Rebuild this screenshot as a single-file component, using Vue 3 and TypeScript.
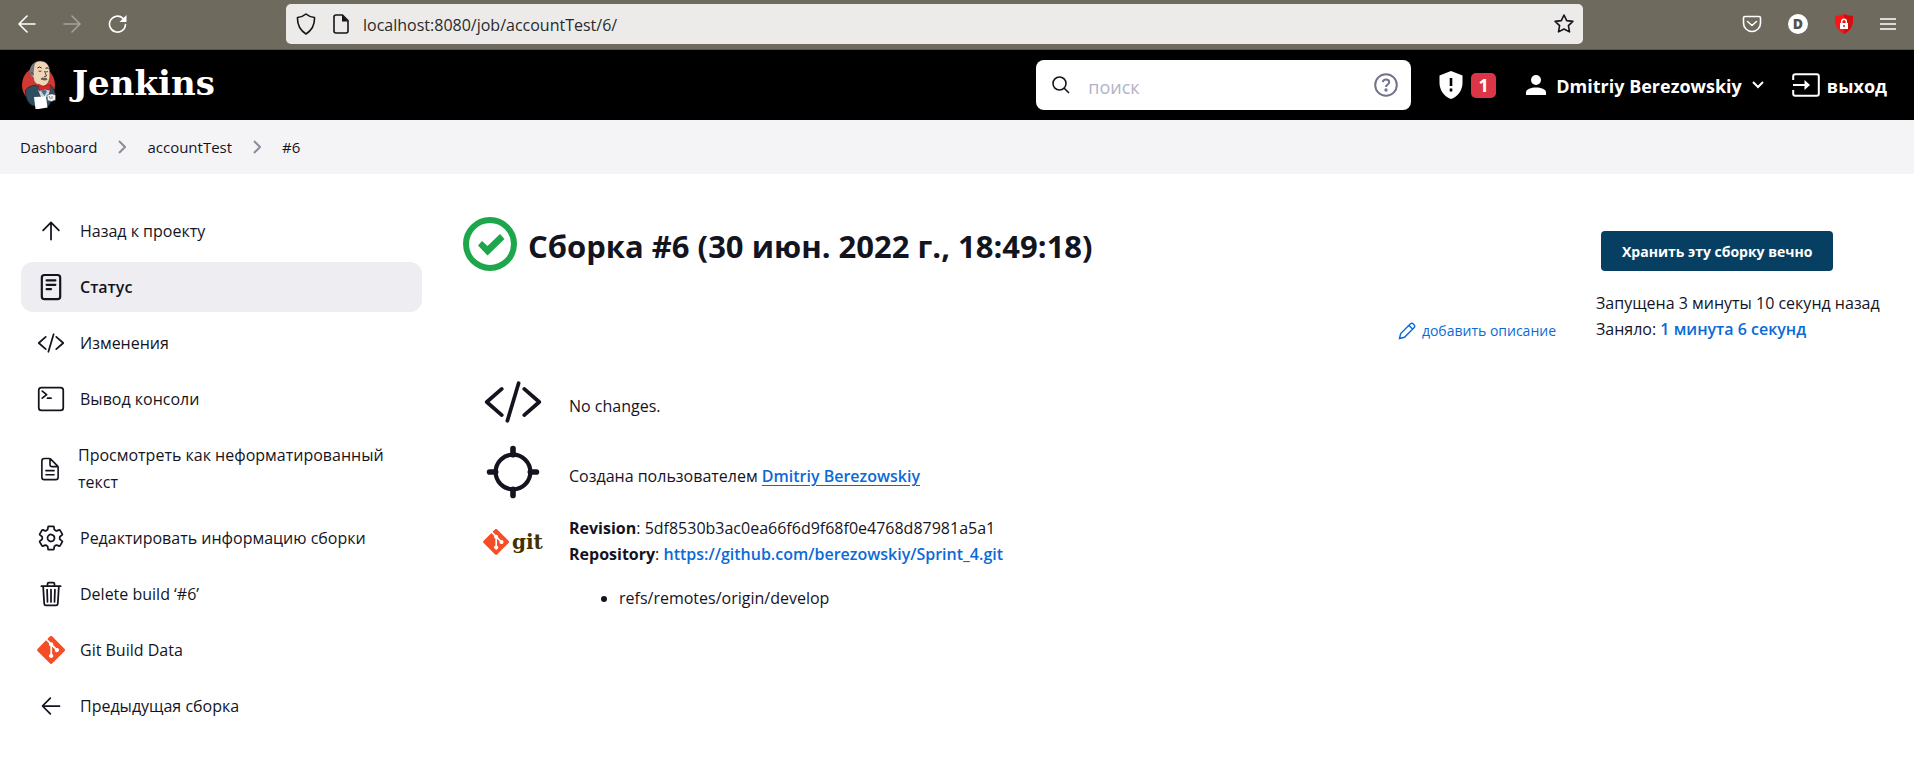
<script setup lang="ts">
interface Task {
  icon: string
  label: string
  active?: boolean
  narrow?: boolean
}

const crumbs: string[] = ['Dashboard', 'accountTest', '#6']

const tasks: Task[] = [
  { icon: 'up', label: 'Назад к проекту' },
  { icon: 'status', label: 'Статус', active: true },
  { icon: 'code', label: 'Изменения' },
  { icon: 'terminal', label: 'Вывод консоли' },
  { icon: 'document', label: 'Просмотреть как неформатированный текст', narrow: true },
  { icon: 'gear', label: 'Редактировать информацию сборки' },
  { icon: 'trash', label: 'Delete build ‘#6’' },
  { icon: 'git', label: 'Git Build Data' },
  { icon: 'left', label: 'Предыдущая сборка' },
]

const paths: Record<string, string> = {
  up: 'M112 244l144-144 144 144M256 120v292',
  left: 'M244 400L100 256l144-144M120 256h292',
  code: 'M160 368L32 256l128-112M352 368l128-112-128-112M304 96l-96 320',
  terminal: 'M96 112l80 64-80 64M192 240h64',
  document:
    'M416 221.25V416a48 48 0 01-48 48H144a48 48 0 01-48-48V96a48 48 0 0148-48h98.75a32 32 0 0122.62 9.37l141.26 141.26a32 32 0 019.37 22.62zM256 56v120a32 32 0 0032 32h120M176 288h160M176 368h160',
  gear:
    'M262.29 192.31a64 64 0 1057.4 57.4 64.13 64.13 0 00-57.4-57.4zM416.39 256a154.34 154.34 0 01-1.53 20.79l45.21 35.46a10.81 10.81 0 012.45 13.75l-42.77 74a10.81 10.81 0 01-13.14 4.59l-44.9-18.08a16.11 16.11 0 00-15.17 1.75A164.48 164.48 0 01325 400.8a15.94 15.94 0 00-8.82 12.14l-6.73 47.89a11.08 11.08 0 01-10.68 9.17h-85.54a11.11 11.11 0 01-10.69-8.87l-6.72-47.82a16.07 16.07 0 00-9-12.22 155.3 155.3 0 01-21.46-12.57 16 16 0 00-15.11-1.71l-44.89 18.07a10.81 10.81 0 01-13.14-4.58l-42.77-74a10.8 10.8 0 012.45-13.75l38.21-30a16.05 16.05 0 006-14.08c-.36-4.17-.58-8.33-.58-12.5s.21-8.27.58-12.35a16 16 0 00-6.07-13.94l-38.19-30A10.81 10.81 0 0149.48 186l42.77-74a10.81 10.81 0 0113.14-4.59l44.9 18.08a16.11 16.11 0 0015.17-1.75A164.48 164.48 0 01187 111.2a15.94 15.94 0 008.82-12.14l6.73-47.89A11.08 11.08 0 01213.23 42h85.54a11.11 11.11 0 0110.69 8.87l6.72 47.82a16.07 16.07 0 009 12.22 155.3 155.3 0 0121.46 12.57 16 16 0 0015.11 1.71l44.89-18.07a10.81 10.81 0 0113.14 4.58l42.77 74a10.8 10.8 0 01-2.45 13.75l-38.21 30a16.05 16.05 0 00-6.05 14.08c.33 4.14.55 8.3.55 12.47z',
  trash:
    'M112 112l20 320c.95 18.49 14.4 32 32 32h184c17.67 0 30.87-13.51 32-32l20-320M80 112h352M192 112V72a24 24 0 0124-24h80a24 24 0 0124 24v40M256 176v224M184 176l8 224M328 176l-8 224',
  status: 'M176 136h160M176 216h160M176 296h80',
}

const gitMark =
  'M90.2 41.6L50.4 1.8a5.9 5.9 0 00-8.3 0l-8.3 8.3 10.5 10.5a7 7 0 018.8 8.9l10.1 10.1a7 7 0 11-4.2 4L49.6 34.2v24.8a7 7 0 11-5.8-.2V33.7a7 7 0 01-3.8-9.2L29.7 14.2 2.3 41.6a5.9 5.9 0 000 8.3l39.800 39.800a5.900 5.900 0 008.300 0l39.800-39.800a5.900 5.900 0 000-8.300z'
</script>

<template>
  <div class="window">
    <div class="toolbar">
      <div class="nav-buttons">
        <button type="button" aria-label="Назад">
          <svg width="18" height="18" viewBox="0 0 18 18"><path d="M17 9H1.500M9 1L1 9l8 8" /></svg>
        </button>
        <button type="button" class="dim" aria-label="Вперёд">
          <svg width="18" height="18" viewBox="0 0 18 18"><path d="M1 9h15.500M9 1l8 8-8 8" /></svg>
        </button>
        <button type="button" aria-label="Обновить">
          <svg width="20" height="20" viewBox="0 0 20 20">
            <path d="M17.500 10.500a8 8 0 1 1-2.500-6.200L17 6" /><path class="filled" d="M18.500 1v7h-7z" />
          </svg>
        </button>
      </div>
      <div class="url-box">
        <svg width="20" height="22" viewBox="0 0 20 22"><path d="M10 1c2 1.800 5 3 8.500 3.500C18.800 11.500 16.500 17 10 21 3.500 17 1.200 11.500 1.500 4.500 5 4 8 2.800 10 1z" /></svg>
        <svg width="16" height="20" viewBox="0 0 16 20"><path d="M3 1h6.500L15 6.500V17a2 2 0 0 1-2 2H3a2 2 0 0 1-2-2V3a2 2 0 0 1 2-2z" /><path class="filled" d="M9 1v6.500h6z" /></svg>
        <input class="url" aria-label="Адрес" value="localhost:8080/job/accountTest/6/" />
        <button type="button" aria-label="В закладки">
          <svg width="22" height="22" viewBox="0 0 22 22"><path d="M11 2l2.700 5.600 6.200.8-4.500 4.300 1.100 6.200L11 16l-5.500 2.900 1.100-6.200L2.100 8.400l6.200-.8z" /></svg>
        </button>
      </div>
      <div class="extensions">
        <button type="button" aria-label="Pocket">
          <svg width="20" height="18" viewBox="0 0 20 18"><path d="M3 1.500h14a1.500 1.500 0 0 1 1.500 1.500v5a8.500 8.500 0 0 1-17 0V3A1.500 1.500 0 0 1 3 1.500zM5.500 6.500L10 10.500l4.500-4" /></svg>
        </button>
        <button type="button" class="profile">D</button>
        <button type="button" aria-label="Блокировщик">
          <svg class="blocker" width="20" height="20" viewBox="0 0 20 20">
            <path class="shield" d="M10 0c2.500 1.300 5.500 2 9 2 .5 8-1.500 14.500-9 18C2.500 16.500.5 10 1 2c3.500 0 6.500-.7 9-2z" />
            <path class="shade" d="M10 0c2.500 1.300 5.500 2 9 2 .5 8-1.500 14.500-9 18z" />
            <path class="lock" d="M6 9h1V7.500a3 3 0 0 1 6 0V9h1v6H6zM8.400 9h3.200V7.500a1.600 1.600 0 0 0-3.200 0z" />
            <circle class="shade" cx="10" cy="12" r="1" />
          </svg>
        </button>
        <button type="button" aria-label="Меню">
          <svg width="16" height="14" viewBox="0 0 16 14"><path d="M0 2h16M0 7h16M0 12h16" /></svg>
        </button>
      </div>
    </div>

    <header class="header">
      <a class="brand" href="#">
        <svg width="36" height="50" viewBox="0 0 36 50">
          <ellipse cx="18.500" cy="25" rx="16.500" ry="18" fill="#d33833" />
          <path d="M5.500 30C8 27 11 26 15 25l6 3 9-3c4 2 5.500 7 5.500 12l-4 4-3 5H14c-5-1-9-7-8.500-16z" fill="#2f4f60" stroke="#16232c" stroke-width=".7" />
          <path d="M11 13C10 6 14 1 20 1c6 0 9.500 4 9.700 10 .2 3 .8 7-1.200 11-2 3.500-5 5-8.500 3.500-5-2-6.500-4-6.500-8C11.500 17 11 15 11 13z" fill="#f0d6b7" stroke="#3a3430" stroke-width=".5" />
          <path d="M12 18C7.500 11 10 4 17 1.500c-3 2.500-2.500 5-3 8.500l-.5 3z" fill="#77767a" />
          <path d="M11 13c1.500-1 2.500 0 2.500 2.500" fill="none" stroke="#3a3430" stroke-width=".7" />
          <path d="M17.500 8q2-2 4 0M25.500 8.500q1.500-1.500 3 0" fill="none" stroke="#222" stroke-width="1" />
          <path d="M18.500 11q1.500.8 3 0M25.500 11.500q1.200.8 2.500 0M24.500 11l2 5-2.500.8" fill="none" stroke="#222" stroke-width=".8" />
          <path d="M20.500 19c2-2 3-1.500 4-1 1.500-.5 2.500 0 3 2-2.500.5-4.500 1-7-1z" fill="#6b5b54" />
          <path d="M18 30l6-1 6 1-2 7h-7z" fill="#c9d8e0" />
          <path d="M21 31l3-1.500 3 1.500-2.500 5z" fill="#4a6f86" />
          <path d="M18.500 24l5 2.500 6.500-2 .5 6-5.500-1.500-6 2z" fill="#d9252a" stroke="#8b1518" stroke-width=".4" />
          <path d="M14 37l12-.500 1.500 11-9 1.500h-3z" fill="#fff" />
          <path d="M27 35.500c3-2 7-2 8.500 0v4.500l-4 1.500-4-1z" fill="#f3f3f3" stroke="#444" stroke-width=".6" />
          <path d="M29 36l1.500 3M32 36v3" stroke="#555" stroke-width=".7" />
        </svg>
        <span>Jenkins</span>
      </a>
      <label class="search">
        <svg width="18" height="18" viewBox="0 0 18 18"><circle cx="7.500" cy="7.500" r="6.500" /><path d="M12 12l5 5" /></svg>
        <input type="search" placeholder="поиск" aria-label="поиск" />
        <svg class="help" width="24" height="24" viewBox="0 0 24 24">
          <circle cx="12" cy="12" r="10.800" /><path d="M8.800 9.200c.2-1.800 1.500-2.700 3.200-2.700s3.200 1 3.200 2.700c0 2.300-3.200 2.300-3.200 4.800" /><circle cx="12" cy="17" r=".7" />
        </svg>
      </label>
      <a class="alerts" href="#" aria-label="Предупреждения безопасности">
        <svg width="24" height="28" viewBox="0 0 24 28"><path d="M12 0l11.500 4.500V12c0 7-4.500 13.500-11.500 16C5 25.500.5 19 .5 12V4.500z" fill="#fff" /><path d="M12 7v8M12 17.500v3" stroke="#000" stroke-width="2.600" /></svg>
        <span class="badge">1</span>
      </a>
      <a class="user" href="#">
        <svg width="20" height="20" viewBox="0 0 20 20" fill="#fff"><circle cx="10" cy="5" r="5" /><path d="M0 20v-2.500C0 14 5 12.500 10 12.500s10 1.500 10 5V20z" /></svg>
        <span>Dmitriy Berezowskiy</span>
        <svg class="chevron" width="12" height="8" viewBox="0 0 12 8"><path d="M1 1l5 5 5-5" /></svg>
      </a>
      <a class="logout" href="#">
        <svg width="28" height="24" viewBox="0 0 28 24"><path d="M1.200 7V3.200a2 2 0 0 1 2-2h21.600a2 2 0 0 1 2 2v17.600a2 2 0 0 1-2 2H3.200a2 2 0 0 1-2-2V17M1 12h14" /><path class="tip" d="M12.500 7l5.500 5-5.500 5z" /></svg>
        <span>выход</span>
      </a>
    </header>

    <nav class="crumbs">
      <template v-for="(crumb, i) in crumbs" :key="crumb">
        <svg v-if="i > 0" width="8" height="14" viewBox="0 0 8 14"><path d="M1 1l6 6-6 6" /></svg>
        <a href="#">{{ crumb }}</a>
      </template>
    </nav>

    <div class="page">
      <aside class="tasks">
        <a v-for="task in tasks" :key="task.label" href="#" class="task" :class="{ active: task.active, narrow: task.narrow }">
          <svg v-if="task.icon === 'git'" class="task-icon" viewBox="0 0 92 92"><path :d="gitMark" fill="#f64d27" /></svg>
          <svg v-else class="task-icon line" :class="{ heavy: task.active }" viewBox="0 0 512 512">
            <rect v-if="task.icon === 'status'" x="88" y="36" width="336" height="440" rx="48" />
            <rect v-if="task.icon === 'terminal'" x="32" y="48" width="448" height="416" rx="48" />
            <path :d="paths[task.icon]" />
          </svg>
          <span>{{ task.label }}</span>
        </a>
      </aside>

      <main class="main">
        <div class="build">
          <h1>
            <svg width="54" height="54" viewBox="0 0 54 54"><circle cx="27" cy="27" r="24" fill="none" stroke="#1ea64b" stroke-width="6" /><path d="M15 28.500l4-4.500 5.500 5L37 17l4.500 5-17 16.500z" fill="#1ea64b" /></svg>
            <span>Сборка #6 (30 июн. 2022 г., 18:49:18)</span>
          </h1>
          <a class="describe" href="#">
            <svg width="18" height="18" viewBox="0 0 18 18"><path d="M1.500 16.500l1.200-5L12.500 1.800a1.800 1.800 0 0 1 2.600 0l1.100 1.100a1.800 1.800 0 0 1 0 2.600L6.500 15.300zM11 3.500L14.500 7" /></svg>
            <span>добавить описание</span>
          </a>
          <table class="summary">
            <tbody>
              <tr>
                <td class="picture"><svg class="line big" viewBox="0 0 512 512"><path :d="paths.code" /></svg></td>
                <td class="text">No changes.</td>
              </tr>
              <tr>
                <td class="picture">
                  <svg class="line big" viewBox="0 0 512 512"><circle cx="256" cy="256" r="148" stroke-width="36" /><path d="M256 108V56M256 456v-52M404 256h52M56 256h52" stroke-width="48" /></svg>
                </td>
                <td class="text">Создана пользователем <a class="underlined" href="#">Dmitriy Berezowskiy</a></td>
              </tr>
              <tr>
                <td class="picture git-cell">
                  <span class="git-logo"><svg width="26" height="26" viewBox="0 0 92 92"><path :d="gitMark" fill="#f64d27" /></svg><span>git</span></span>
                </td>
                <td class="git-data">
                  <b>Revision</b>: 5df8530b3ac0ea66f6d9f68f0e4768d87981a5a1<br />
                  <b>Repository</b>: <a href="#">https://github.com/berezowskiy/Sprint_4.git</a>
                  <ul><li>refs/remotes/origin/develop</li></ul>
                </td>
              </tr>
            </tbody>
          </table>
        </div>
        <div class="controls">
          <button type="button" class="keep">Хранить эту сборку вечно</button>
          <p>Запущена 3 минуты 10 секунд назад<br />Заняло: <a href="#">1 минута 6 секунд</a></p>
        </div>
      </main>
    </div>
  </div>
</template>

<style>
body {
  margin: 0;
  background: #fff;
}
</style>

<style scoped>
.window {
  font-family: "Open Sans", "Noto Sans", sans-serif;
  font-size: 16px;
  line-height: 26px;
  color: #14141f;
}
a {
  color: #0b6ad6;
  text-decoration: none;
  font-weight: 600;
}
button {
  padding: 0;
  border: 0;
  background: none;
  color: inherit;
  font-family: inherit;
}
svg {
  display: block;
  flex: none;
}

.toolbar {
  box-sizing: border-box;
  display: flex;
  align-items: center;
  height: 50px;
  padding: 0 18px 2px 18px;
  background: #6f6a5e;
  border-bottom: 1px solid #57534a;
  color: #fff;
}
.toolbar svg {
  fill: none;
  stroke: currentColor;
  stroke-width: 1.6;
  stroke-linejoin: round;
  stroke-linecap: round;
}
.toolbar .filled {
  fill: currentColor;
  stroke: none;
}
.toolbar .blocker {
  stroke: none;
}
.shield {
  fill: #fd1515;
}
.shade {
  fill: #d40d0d;
}
.lock {
  fill: #fff;
  fill-rule: evenodd;
}
.nav-buttons {
  display: flex;
  align-items: center;
  gap: 27px;
  width: 268px;
}
.dim {
  color: #a5a29b;
}
.url-box {
  box-sizing: border-box;
  flex: 1;
  display: flex;
  align-items: center;
  height: 40px;
  padding: 0 8px 0 10px;
  background: #ecebe9;
  border-radius: 5px;
  color: #15141a;
}
.url-box > svg + svg {
  margin-left: 17px;
}
.url {
  flex: 1;
  min-width: 0;
  height: 30px;
  margin-left: 14px;
  padding: 2px 0 0;
  border: 0;
  outline: 0;
  background: none;
  font-family: inherit;
  font-size: 16px;
  color: #2a292d;
}
.extensions {
  display: flex;
  align-items: center;
  justify-content: space-between;
  width: 154px;
  margin-left: 159px;
}
.profile {
  width: 20px;
  height: 20px;
  border-radius: 50%;
  background: #fff;
  color: #55524a;
  font-size: 14px;
  font-weight: 800;
  line-height: 20px;
}

.header {
  display: flex;
  align-items: center;
  height: 70px;
  padding: 0 27px 0 20px;
  background: #000;
}
.header a {
  display: flex;
  align-items: center;
  color: #fff;
  font-size: 18px;
  font-weight: 700;
}
.header .brand {
  gap: 16px;
  font-family: "DejaVu Serif", serif;
  font-size: 34px;
}
.brand span {
  padding-bottom: 4px;
}
.search {
  box-sizing: border-box;
  display: flex;
  align-items: center;
  width: 375px;
  height: 50px;
  margin-left: auto;
  padding: 0 13px 0 16px;
  background: #fff;
  border-radius: 8px;
}
.search svg {
  fill: none;
  stroke: #14141f;
  stroke-width: 1.6;
}
.search .help {
  stroke: #73738c;
  stroke-width: 2;
}
.search input {
  flex: 1;
  min-width: 0;
  margin: 0 10px 0 18px;
  padding: 4px 0 0;
  border: 0;
  outline: 0;
  background: none;
  font-family: inherit;
  font-size: 18px;
}
.search input::placeholder {
  color: #b3b3c6;
  opacity: 1;
}
.alerts {
  gap: 8px;
  margin-left: 28px;
}
.badge {
  width: 25px;
  height: 25px;
  border-radius: 5px;
  background: #dc3545;
  line-height: 25px;
  text-align: center;
}
.user {
  gap: 10px;
  margin-left: 30px;
}
.user > span,
.logout > span {
  padding-top: 2px;
}
.user .chevron,
.logout svg {
  fill: none;
  stroke: #fff;
  stroke-width: 2;
}
.logout .tip {
  fill: #fff;
  stroke: none;
}
.logout {
  gap: 7px;
  margin-left: 28px;
}

.crumbs {
  display: flex;
  align-items: center;
  gap: 21px;
  height: 54px;
  padding: 0 20px;
  background: #f4f4f7;
}
.crumbs a {
  color: #14141f;
  font-size: 15px;
  font-weight: 400;
}
.crumbs svg {
  fill: none;
  stroke: #8c8c9a;
  stroke-width: 2;
}

.page {
  display: flex;
}
.tasks {
  display: flex;
  flex-direction: column;
  gap: 6px;
  flex: none;
  width: 401px;
  padding: 32px 0 0 21px;
}
.task {
  display: flex;
  align-items: center;
  gap: 15px;
  padding: 12px 16px 11px;
  border-radius: 12px;
  color: #14141f;
  font-weight: 400;
  line-height: 27px;
}
.active {
  background: #eeeef2;
  font-weight: 600;
}
.task-icon {
  width: 28px;
  height: 28px;
  margin: -2px 0 -1px;
}
.narrow .task-icon {
  width: 26px;
}
.line {
  fill: none;
  stroke: #14141f;
  stroke-width: 32;
  stroke-linecap: round;
  stroke-linejoin: round;
}
.heavy {
  stroke-width: 40;
}

.main {
  flex: 1;
  display: flex;
  gap: 40px;
  padding: 43px 36px 0 41px;
}
.build {
  flex: 1;
  display: flex;
  flex-direction: column;
}
h1 {
  display: flex;
  align-items: center;
  gap: 11px;
  margin: 0;
  font-size: 31px;
  line-height: 54px;
}
h1 span {
  padding-top: 2px;
  margin-bottom: -2px;
}
.describe {
  display: flex;
  align-items: center;
  gap: 6px;
  align-self: flex-end;
  margin-top: 47px;
  font-size: 14px;
  font-weight: 400;
}
.describe svg {
  fill: none;
  stroke: currentColor;
  stroke-width: 1.4;
}
.summary {
  margin-top: 23px;
  border-collapse: collapse;
}
.summary td {
  box-sizing: border-box;
  height: 70px;
  padding: 0;
}
.summary .text {
  padding-top: 8px;
}
.summary .picture {
  width: 106px;
}
.big {
  width: 60px;
  height: 60px;
  margin-left: 20px;
}
.underlined {
  text-decoration: underline;
  text-underline-offset: 3px;
}
.git-cell {
  vertical-align: top;
}
.git-logo {
  display: flex;
  align-items: center;
  gap: 3px;
  margin: 22px 0 0 20px;
  font-family: "DejaVu Serif", serif;
  font-size: 20px;
  font-weight: 700;
  color: #413000;
}
.summary .git-data {
  padding-top: 8px;
  vertical-align: top;
}
.git-data ul {
  margin: 18px 0 0;
  padding-left: 50px;
}
.controls {
  flex: none;
  width: 282px;
}
.keep {
  display: block;
  height: 40px;
  margin: 14px 0 0 5px;
  padding: 0 21px;
  border-radius: 4px;
  background: #073f63;
  color: #fff;
  font-size: 14px;
  font-weight: 700;
}
.controls p {
  margin: 19px 0 0;
  white-space: nowrap;
}
</style>
